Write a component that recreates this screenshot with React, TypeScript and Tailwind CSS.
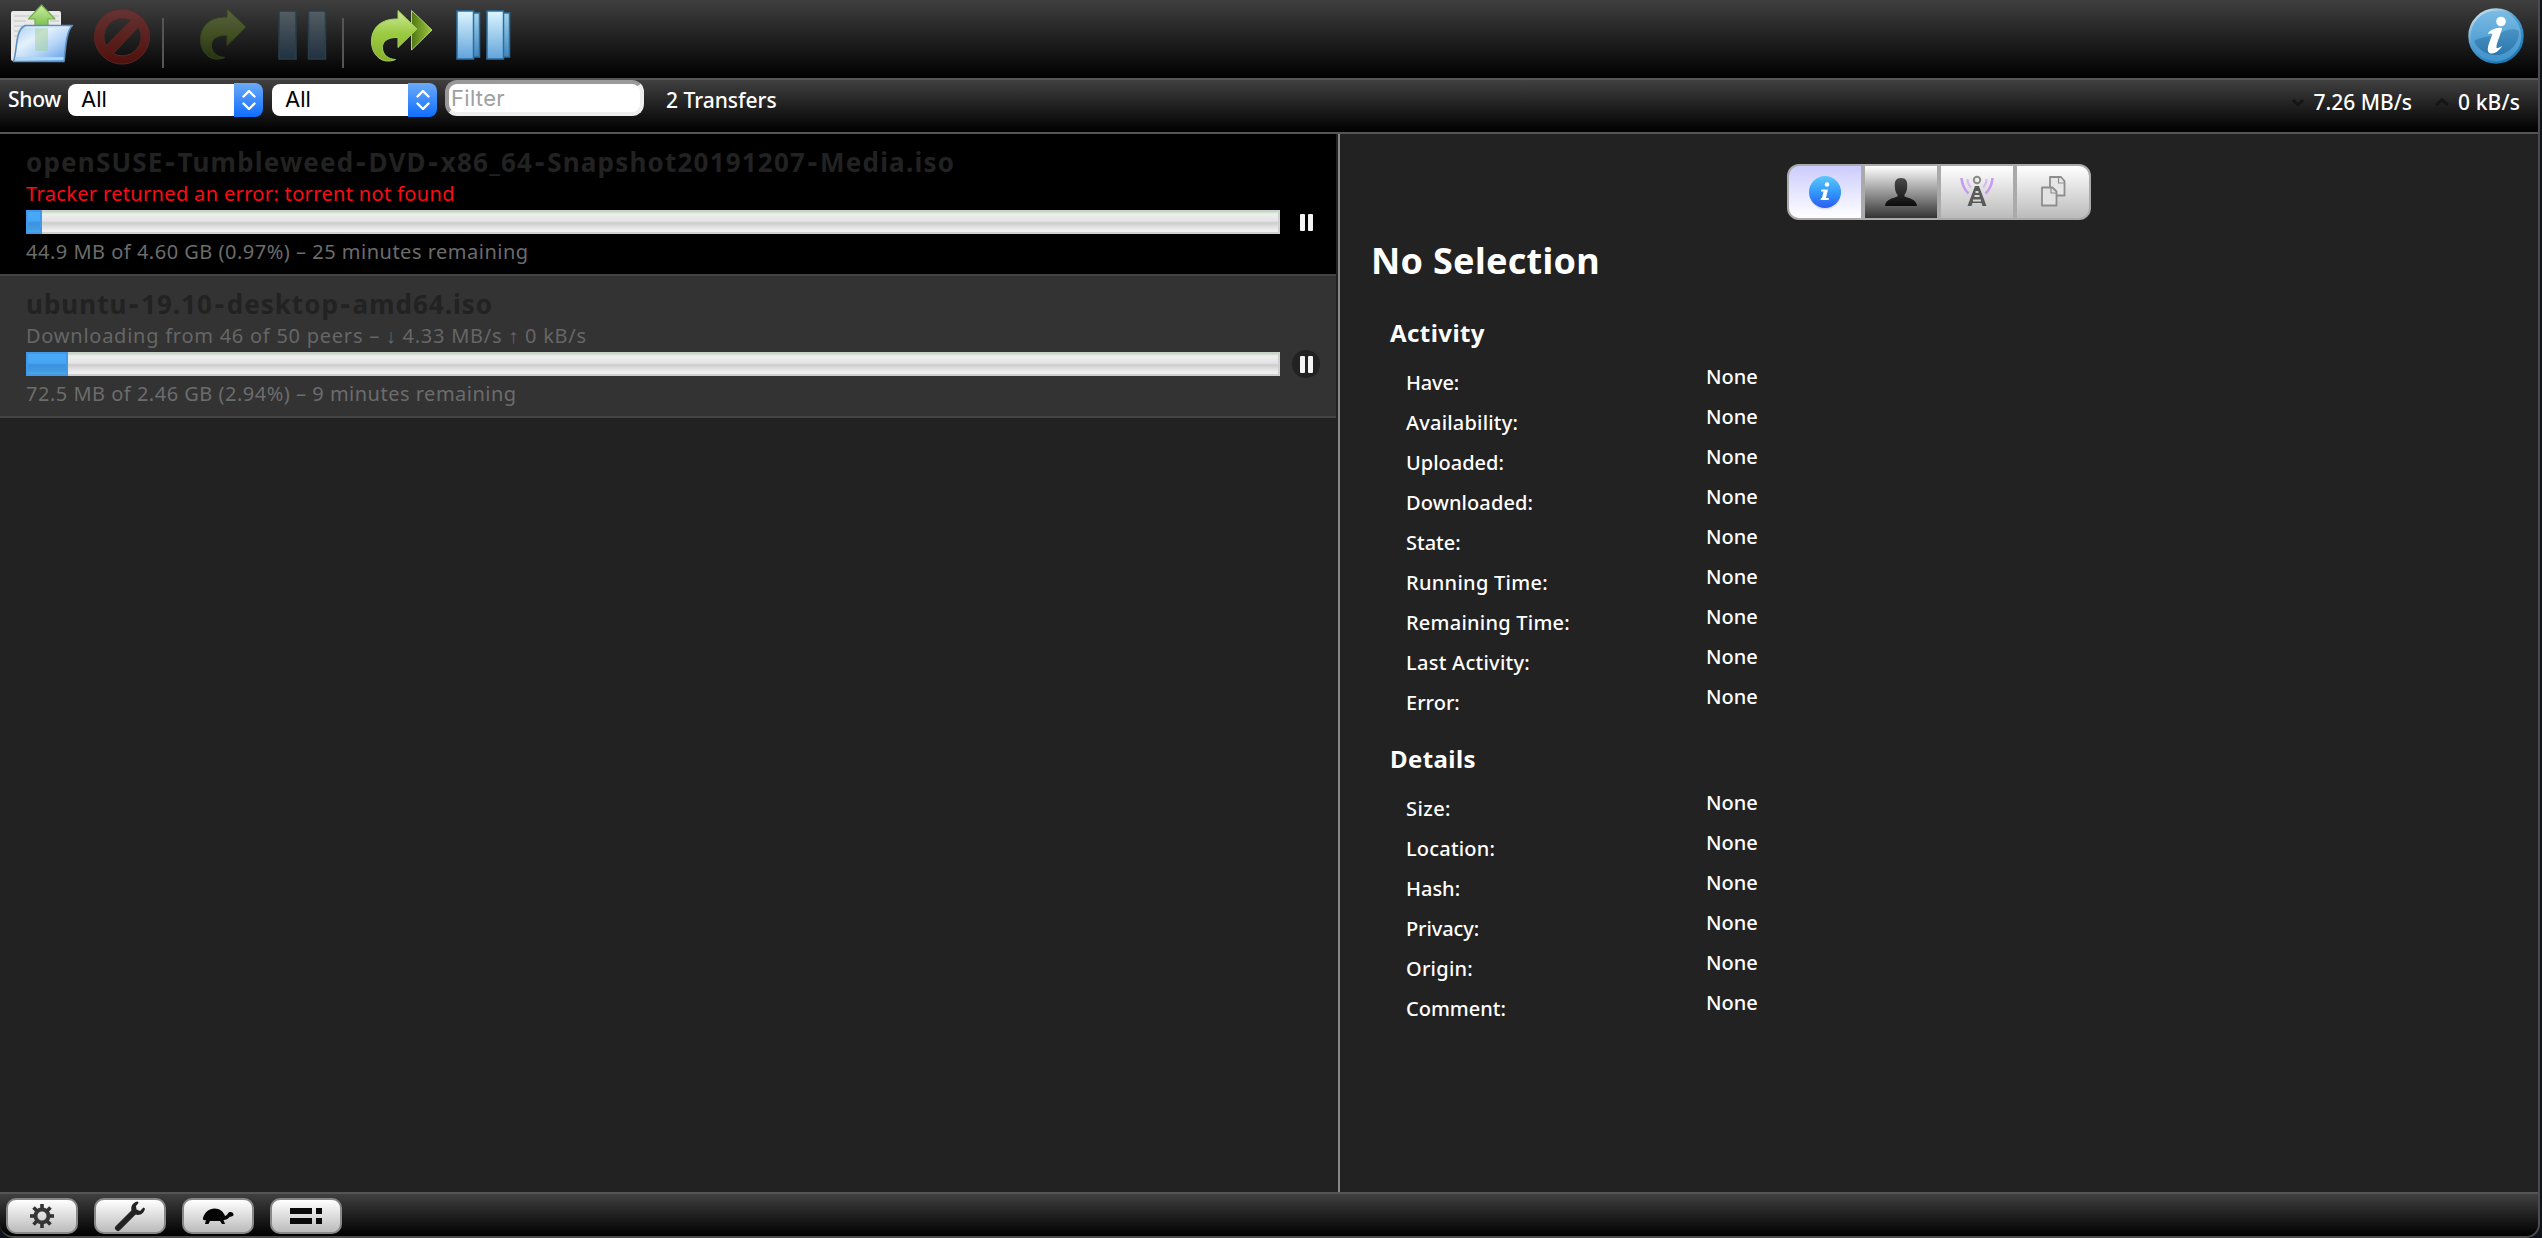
import React from "react";

type TextProps = { className?: string; children: React.ReactNode };

function T({ className = "", children }: TextProps) {
  return <span className={"whitespace-pre " + className}>{children}</span>;
}

function Separator() {
  return <div className="mt-[18px] h-[50px] w-[2px] bg-[#555]" />;
}

function OpenIcon() {
  return (
    <svg className="ml-[8px] h-[68px] w-[68px]" viewBox="8 0 68 68">
      <defs>
        <linearGradient id="folder" x1="0" y1="0" x2="1" y2="1">
          <stop offset="0" stopColor="#a9cdf0" />
          <stop offset=".35" stopColor="#e4f1fc" />
          <stop offset=".6" stopColor="#b4d4f7" />
          <stop offset="1" stopColor="#4f90e6" />
        </linearGradient>
        <linearGradient id="up" x1="0" y1="0" x2="0" y2="1">
          <stop offset="0" stopColor="#c9efa0" />
          <stop offset="1" stopColor="#7cbc4c" />
        </linearGradient>
      </defs>
      <rect x="11" y="11" width="50" height="50" rx="2" fill="#e9e9e9" />
      <path d="M14 16h18M14 21h12M14 26h9M14 31h6M14 36h5M50 16h9M50 21h9" stroke="#cfcfcf" strokeWidth="1.6" />
      <path d="M41.5 5L55 19H48V27H35V19H28.5Z" fill="url(#up)" stroke="#74ad4a" strokeWidth="1.2" strokeLinejoin="round" />
      <path d="M25 25.5H72.5C66 31 65.5 50 64 61.5H13.5C17.5 50 15 30 25 25.5Z" fill="url(#folder)" stroke="#5c8fbe" strokeWidth="1.6" strokeLinejoin="round" />
      <path d="M35 27H48V51H35Z" fill="#9ccf8c" opacity=".45" />
      <path d="M15 58.5H63.5" stroke="#a7daf6" strokeWidth="3" />
      <path d="M26 27.5H68" stroke="#d5ebfb" strokeWidth="1.5" />
    </svg>
  );
}

function RemoveIcon() {
  return (
    <svg className="ml-[16px] h-[68px] w-[60px]" viewBox="92 0 60 68">
      <defs>
        <linearGradient id="no" x1="0" y1="0" x2="0" y2="1">
          <stop offset="0" stopColor="#643535" />
          <stop offset=".5" stopColor="#5b211e" />
          <stop offset="1" stopColor="#4f100d" />
        </linearGradient>
      </defs>
      <path
        fillRule="evenodd"
        fill="url(#no)"
        stroke="#5a2826"
        strokeWidth="1"
        d="M122 9A27.5 27.5 0 1 1 121.99 9ZM131 20A19 19 0 0 0 106 46ZM113 53.5A19 19 0 0 0 138.5 27Z"
      />
    </svg>
  );
}

const ARROW =
  "M227 8.5L246 27L227 45.5V35.5C216 35 210.5 40 211.5 47C212.5 53 217 57 224.5 57.5C211 63 200.5 53 200.5 39.5C200.5 25 211 16.5 227 17Z";

function ResumeIcon() {
  return (
    <svg className="ml-[32px] h-[68px] w-[54px]" viewBox="196 0 54 68">
      <defs>
        <linearGradient id="dimgreen" x1="0" y1="0" x2="0" y2="1">
          <stop offset="0" stopColor="#58633f" />
          <stop offset=".5" stopColor="#435024" />
          <stop offset="1" stopColor="#27320f" />
        </linearGradient>
      </defs>
      <path d={ARROW} fill="url(#dimgreen)" stroke="#35401f" strokeWidth="1" />
    </svg>
  );
}

function PauseIcon() {
  return (
    <svg className="ml-[24px] h-[68px] w-[54px]" viewBox="274 0 54 68">
      <defs>
        <linearGradient id="dimblue" x1="0" y1="0" x2="0" y2="1">
          <stop offset="0" stopColor="#535d62" />
          <stop offset="1" stopColor="#213142" />
        </linearGradient>
      </defs>
      <rect x="279" y="11" width="17" height="48" fill="url(#dimblue)" stroke="#2a3c4a" strokeWidth="1.5" />
      <rect x="308.5" y="11" width="17" height="48" fill="url(#dimblue)" stroke="#2a3c4a" strokeWidth="1.5" />
    </svg>
  );
}

function ResumeAllIcon() {
  return (
    <svg className="ml-[24px] h-[68px] w-[68px]" viewBox="368 0 68 68">
      <defs>
        <linearGradient id="green" x1="0" y1="0" x2="0" y2="1">
          <stop offset="0" stopColor="#cdea9c" />
          <stop offset=".45" stopColor="#9bcb43" />
          <stop offset="1" stopColor="#86b02c" />
        </linearGradient>
        <linearGradient id="green2" x1="0" y1="0" x2="1" y2="0">
          <stop offset="0" stopColor="#4f7714" />
          <stop offset="1" stopColor="#9cc83c" />
        </linearGradient>
      </defs>
      <path d="M411.5 10.5L432 30L411.5 50Z" fill="url(#green2)" stroke="#b3d873" strokeWidth="1" />
      <path transform="translate(171 2)" d={ARROW} fill="url(#green)" stroke="#a5d05a" strokeWidth="1" />
    </svg>
  );
}

function PauseAllIcon() {
  return (
    <svg className="ml-[16px] h-[68px] w-[64px]" viewBox="452 0 64 68">
      <defs>
        <linearGradient id="blue" x1="0" y1="0" x2="0" y2="1">
          <stop offset="0" stopColor="#dcf6ff" />
          <stop offset="1" stopColor="#62a3da" />
        </linearGradient>
        <linearGradient id="blue2" x1="0" y1="0" x2="0" y2="1">
          <stop offset="0" stopColor="#a5d5ee" />
          <stop offset="1" stopColor="#3f86bf" />
        </linearGradient>
      </defs>
      <g stroke="#2a6fa0" strokeWidth="1.5">
        <rect x="472" y="13" width="7.5" height="44" fill="url(#blue2)" />
        <rect x="457" y="11" width="16.5" height="48" fill="url(#blue)" />
        <rect x="502" y="13" width="7.5" height="44" fill="url(#blue2)" />
        <rect x="487" y="11" width="16.5" height="48" fill="url(#blue)" />
      </g>
    </svg>
  );
}

function InfoIcon() {
  return (
    <svg className="mr-[12px] h-[68px] w-[60px]" viewBox="2466 0 60 68">
      <defs>
        <linearGradient id="infobg" x1="0" y1="0" x2="0" y2="1">
          <stop offset="0" stopColor="#7dbde4" />
          <stop offset=".5" stopColor="#5aa5d8" />
          <stop offset="1" stopColor="#3f92cc" />
        </linearGradient>
        <linearGradient id="infolow" x1="0" y1="0" x2="0" y2="1">
          <stop offset="0" stopColor="#4a92c4" />
          <stop offset="1" stopColor="#2b77ac" />
        </linearGradient>
        <linearGradient id="inforim" x1="0" y1="0" x2=".6" y2="1">
          <stop offset="0" stopColor="#e6f2f8" />
          <stop offset=".5" stopColor="#4f9fd0" />
          <stop offset="1" stopColor="#1d78b4" />
        </linearGradient>
      </defs>
      <circle cx="2496" cy="36" r="26.5" fill="url(#infobg)" stroke="url(#inforim)" strokeWidth="2.5" />
      <path d="M2474 41C2480 36 2495 37 2502 32C2508 29 2514 28 2519 31A23.5 23.5 0 0 1 2474 41Z" fill="url(#infolow)" />
      <circle cx="2501" cy="21.5" r="4.8" fill="#fff" />
      <path d="M2490 31C2493 28.5 2499 27 2502 28C2502 32 2496 43 2496.5 48C2498 48.5 2500 47 2502 46C2500 50 2495 54 2490.5 53.5C2485 52 2489 43 2492.5 34C2491.5 33 2489 33.5 2488 34C2488 33 2489 32 2490 31Z" fill="#fff" />
    </svg>
  );
}

function Select({ width, children }: { width: string; children: React.ReactNode }) {
  return (
    <div className={"mt-[3px] flex h-[34px] items-center " + width}>
      <div className="flex h-[32px] flex-1 items-center rounded-l-[8px] bg-white pl-[13px]">
        <T className="font-['Inter',sans-serif] text-[22px] leading-[30px] pb-[2px] text-black">{children}</T>
      </div>
      <div className="flex h-[34px] w-[29px] items-center justify-center rounded-r-[8px] bg-linear-to-b/srgb from-[#6caaf8] to-[#0f6efd]">
        <svg className="h-[22px] w-[16px]" viewBox="0 0 16 22" fill="none" stroke="#fff" strokeWidth="2.4" strokeLinecap="round" strokeLinejoin="round">
          <path d="M2.5 7.5L8 2L13.5 7.5M2.5 14.5L8 20L13.5 14.5" />
        </svg>
      </div>
    </div>
  );
}

type TorrentProps = {
  name: string;
  nameClass: string;
  status: string;
  statusClass: string;
  detail: string;
  fill: number;
  rowClass: string;
  hover?: boolean;
};

function Torrent(p: TorrentProps) {
  return (
    <div className={"flex h-[142px] flex-col border-b-2 border-[#444] pl-[26px] " + p.rowClass}>
      <div className="mt-[11px] flex h-[34px]">
        <T className={"text-[26px] font-bold leading-[34px] text-[#222] " + p.nameClass}>
          {p.name.split("-").map((part, i) => (
            <React.Fragment key={i}>
              {i > 0 && <span className="px-[1px] font-['DejaVu_Sans']">-</span>}
              {part}
            </React.Fragment>
          ))}
        </T>
      </div>
      <div className="mt-[1px] mb-[2px] flex h-[28px]">
        <T className={"text-[20px] leading-[28px] " + p.statusClass}>{p.status}</T>
      </div>
      <div className="flex h-[24px] items-center">
        <div className="flex h-[24px] w-[1254px] border-2 border-[#cfcfcf] bg-[linear-gradient(to_bottom,#c4e3c4_0px,#eeeeee_2px,#e4e4e4_9px,#cccccc_11px,#dddddd_14px,#eeeeee_18px,#eeeeee_20px)]">
          <div
            className="-my-[2px] -ml-[2px] h-[24px] border-2 border-[#4299e8] bg-[linear-gradient(to_bottom,#49a8f8_0px,#47a5f5_9px,#3c92dc_11px,#429ae6_17px,#4aabe0_20px)]"
            style={{ width: p.fill }}
          />
        </div>
        <div className={"ml-[12px] flex h-[28px] w-[28px] shrink-0 items-center justify-center gap-[3px] rounded-full " + (p.hover ? "bg-[#222]" : "")}>
          <div className="h-[17px] w-[5px] rounded-[1px] bg-[#f4f4f4]" />
          <div className="h-[17px] w-[5px] rounded-[1px] bg-[#f4f4f4]" />
        </div>
      </div>
      <div className="mt-[4px] flex h-[28px]">
        <T className="text-[20px] leading-[28px] tracking-[0.5px] text-[#6c6c6c]">{p.detail}</T>
      </div>
    </div>
  );
}

const activity: [string, string][] = [
  ["Have:", "tracking-[-0.17px]"],
  ["Availability:", "tracking-[0.19px]"],
  ["Uploaded:", ""],
  ["Downloaded:", "tracking-[0.1px]"],
  ["State:", ""],
  ["Running Time:", "tracking-[0.28px]"],
  ["Remaining Time:", "tracking-[0.23px]"],
  ["Last Activity:", "tracking-[0.27px]"],
  ["Error:", ""],
];
const details: [string, string][] = [
  ["Size:", "tracking-[0.4px]"],
  ["Location:", "tracking-[0.18px]"],
  ["Hash:", ""],
  ["Privacy:", "tracking-[-0.11px]"],
  ["Origin:", "tracking-[0.24px]"],
  ["Comment:", ""],
];

function Section({ title, rows }: { title: string; rows: [string, string][] }) {
  return (
    <section>
      <h2 className="ml-[50px] flex h-[34px]">
        <T className="text-[24px] font-bold leading-[34px] tracking-[0.42px]">{title}</T>
      </h2>
      <div className="mt-[13px] ml-[66px]">
        {rows.map(([label, spacing]) => (
          <div key={label} className="flex h-[40px] items-start">
            <div className="flex w-[300px]">
              <T className={"text-[20px] font-medium leading-[40px] " + spacing}>{label}</T>
            </div>
            <T className="text-[20px] font-medium leading-[28px]">None</T>
          </div>
        ))}
      </div>
    </section>
  );
}

function TabBar() {
  return (
    <div className="mx-auto flex h-[56px] w-[304px] gap-[4px] overflow-hidden rounded-[12px] border-2 border-[#aaa] bg-[#aaa]">
      <div className="flex w-[72px] items-center justify-center bg-linear-to-b/srgb from-[#ccccff] to-white">
        <svg className="h-[40px] w-[40px]" viewBox="0 0 40 40">
          <defs>
            <linearGradient id="ib" x1="0" y1="0" x2="0" y2="1">
              <stop offset="0" stopColor="#5cc8fb" />
              <stop offset=".5" stopColor="#3399fc" />
              <stop offset="1" stopColor="#2a5cf2" />
            </linearGradient>
          </defs>
          <circle cx="20" cy="22" r="15.5" fill="#8c90b0" opacity=".25" />
          <circle cx="20" cy="20" r="16" fill="url(#ib)" />
          <circle cx="22" cy="12.5" r="2.3" fill="#fff" />
          <path d="M16.5 17.5H23L21 26H24L23.5 28H15.5L16 26H17L18.5 19.5H16Z" fill="#fff" />
        </svg>
      </div>
      <div className="flex w-[72px] items-center justify-center bg-linear-to-b/srgb from-white to-[#333]">
        <svg className="h-[40px] w-[40px]" viewBox="0 0 40 40">
          <defs>
            <linearGradient id="pp" x1="0" y1="0" x2="0" y2="1">
              <stop offset="0" stopColor="#4a4a4a" />
              <stop offset="1" stopColor="#0c0c0c" />
            </linearGradient>
          </defs>
          <path d="M20 6C25 6 26.5 9 26.2 14C26 19 25 21 23.5 22.5V24.5C27 26 35.5 27 36 34H4C4.5 27 13 26 16.5 24.5V22.5C15 21 14 19 13.8 14C13.5 9 15 6 20 6Z" fill="url(#pp)" />
        </svg>
      </div>
      <div className="flex w-[72px] items-center justify-center bg-linear-to-b/srgb from-white to-[#bbb]">
        <svg className="h-[40px] w-[40px]" viewBox="0 0 40 40" fill="none">
          <circle cx="20" cy="8" r="3.2" stroke="#8b8b8b" strokeWidth="2" />
          <path d="M18 14H22L29.5 34H25.5L24.5 31H15.5L14.5 34H10.5Z" fill="#5a5a5a" />
          <path d="M18.5 20H21.5M17.5 24H22.5M16 28.5H24" stroke="#d6d6d6" strokeWidth="2" />
          <path d="M4.5 6C5 13 7 17 11.5 21.5M35.5 6C35 13 33 17 28.5 21.5" stroke="#c79cf0" strokeWidth="2.6" />
          <path d="M10.5 7C10.5 10 11.5 13 14 15.5M29.5 7C29.5 10 28.5 13 26 15.5" stroke="#d6bdf0" strokeWidth="2.2" />
        </svg>
      </div>
      <div className="flex w-[72px] items-center justify-center bg-linear-to-b/srgb from-white to-[#bbb]">
        <svg className="h-[40px] w-[40px]" viewBox="0 0 40 40" stroke="#8d8d8d" strokeWidth="1.8" strokeLinejoin="round">
          <path d="M17 5H28L31.5 9V23.5H17Z" fill="#e6e6e6" />
          <path d="M25.5 5V11H31.5" fill="none" strokeWidth="1.2" />
          <path d="M9 15.5H19.5L23.5 19.5V33.5H9Z" fill="#e2e2e2" />
          <path d="M18 15.5V21H23.5" fill="none" strokeWidth="1.2" />
        </svg>
      </div>
    </div>
  );
}

function BarButton({ children }: { children: React.ReactNode }) {
  return (
    <div className="flex h-[36px] w-[72px] items-center justify-center rounded-[10px] border-2 border-[#888] bg-linear-to-b/srgb from-white to-[#bbb]">
      {children}
    </div>
  );
}

const TEETH = [0, 45, 90, 135, 180, 225, 270, 315];

export default function App() {
  return (
    <div className="h-[1238px] w-[2542px] bg-[#10131c] font-['Noto_Sans','Open_Sans',sans-serif]">
      <div className="flex h-[1238px] w-[2540px] flex-col overflow-hidden rounded-b-[14px] border-r-2 border-b-2 border-[#4c4c4c] bg-[#222] text-white">
        <div className="flex h-[80px] shrink-0 items-start border-b-2 border-[#555] bg-linear-to-b/srgb from-[#3f3f3f] to-black">
          <OpenIcon />
          <RemoveIcon />
          <div className="w-[10px]" />
          <Separator />
          <ResumeIcon />
          <PauseIcon />
          <div className="w-[14px]" />
          <Separator />
          <ResumeAllIcon />
          <PauseAllIcon />
          <div className="flex-1" />
          <InfoIcon />
        </div>

        <div className="flex h-[54px] shrink-0 items-start border-b-2 border-[#555] bg-linear-to-b/srgb from-[#404040] to-black">
          <div className="ml-[8px] w-[60px]">
            <T className="text-[21px] font-medium leading-[38px] tracking-[-0.27px]">Show</T>
          </div>
          <Select width="w-[195px]">All</Select>
          <div className="w-[9px]" />
          <Select width="w-[165px]">All</Select>
          <div className="ml-[8px] flex h-[36px] w-[199px] items-center rounded-[12px] border-4 border-t-[#999] border-r-[#eee] border-b-[#eee] border-l-[#999] bg-white pl-[2px]">
            <T className="font-['Inter',sans-serif] text-[22px] leading-[28px] tracking-[0.3px] text-[#a0a0a0]">Filter</T>
          </div>
          <T className="ml-[22px] text-[21px] font-medium leading-[40px]">2 Transfers</T>
          <div className="flex-1" />
          <svg className="mt-[18px] h-[10px] w-[14px]" viewBox="0 0 14 10"><path d="M2 2L7 7L12 2" fill="none" stroke="#151515" strokeWidth="3" /></svg>
          <T className="ml-[8px] text-[21px] font-medium leading-[44px]">7.26 MB/s</T>
          <svg className="ml-[22px] mt-[18px] h-[10px] w-[16px]" viewBox="0 0 16 10"><path d="M2 7L8 2L14 7" fill="none" stroke="#151515" strokeWidth="3" /></svg>
          <T className="ml-[8px] mr-[18px] text-[21px] font-medium leading-[44px] tracking-[0.13px]">0 kB/s</T>
        </div>

        <div className="flex h-[1058px] shrink-0">
          <main className="w-[1336px]">
            <Torrent
              name="openSUSE-Tumbleweed-DVD-x86_64-Snapshot20191207-Media.iso"
              nameClass="tracking-[1.2px]"
              status="Tracker returned an error: torrent not found"
              statusClass="text-[#ff0a14] tracking-[0.34px]"
              detail="44.9 MB of 4.60 GB (0.97%) – 25 minutes remaining"
              fill={16}
              rowClass="bg-black"
            />
            <Torrent
              name="ubuntu-19.10-desktop-amd64.iso"
              nameClass="tracking-[1px]"
              status="Downloading from 46 of 50 peers – ↓ 4.33 MB/s ↑ 0 kB/s"
              statusClass="text-[#666] tracking-[0.75px]"
              detail="72.5 MB of 2.46 GB (2.94%) – 9 minutes remaining"
              fill={42}
              rowClass="bg-[#333]"
              hover
            />
          </main>
          <aside className="ml-[2px] flex-1 border-l-2 border-[#888]">
            <div className="h-[30px]" />
            <TabBar />
            <h1 className="mt-[16px] ml-[31px] flex h-[50px]">
              <T className="text-[36px] font-bold leading-[50px] tracking-[0.29px]">No Selection</T>
            </h1>
            <div className="h-[30px]" />
            <Section title="Activity" rows={activity} />
            <div className="h-[19px]" />
            <Section title="Details" rows={details} />
          </aside>
        </div>

        <div className="flex h-[44px] flex-1 gap-[16px] border-t-2 border-[#555] bg-linear-to-b/srgb from-[#404040] to-black pt-[4px] pl-[6px]">
          <BarButton>
            <svg className="h-[24px] w-[24px]" viewBox="0 0 24 24">
              <circle cx="12" cy="12" r="6.5" fill="none" stroke="#383838" strokeWidth="4" />
              {TEETH.map((a) => (
                <rect key={a} x="10.2" y="0" width="3.6" height="5" fill="#333" transform={`rotate(${a} 12 12)`} />
              ))}
            </svg>
          </BarButton>
          <BarButton>
            <svg className="h-[32px] w-[32px]" viewBox="0 0 32 32">
              <path d="M4 28L20 12" stroke="#222" strokeWidth="6" strokeLinecap="round" />
              <path d="M24 1.5C19 2 16.5 6 17.5 10.5L21.5 14.5C26 16 30 13.5 31 8.5L29.5 7.5L26 11L22.5 9.5L22 6L24.5 3Z" fill="#222" />
            </svg>
          </BarButton>
          <BarButton>
            <svg className="h-[18px] w-[34px]" viewBox="0 0 34 18">
              <path d="M2 11C4 5 8 1.5 13.5 1.5C19 1.5 22.5 5 24 9C26 9 26.5 6 28.5 5C31 4.5 32.5 6 32.5 7.5C32.5 9.5 30 9.5 28.5 10C27 12 25 13 22.5 13L24 17H21L19 14H9L7.5 17H4L5 13C3 13.5 1.5 13 2 11Z" fill="#050505" />
            </svg>
          </BarButton>
          <BarButton>
            <svg className="h-[16px] w-[32px]" viewBox="0 0 32 16" fill="#0a0a0a">
              <path d="M0 0H22V6H0ZM26 0H32V6H26ZM0 10H22V16H0ZM26 10H32V16H26Z" />
            </svg>
          </BarButton>
        </div>
      </div>
    </div>
  );
}
